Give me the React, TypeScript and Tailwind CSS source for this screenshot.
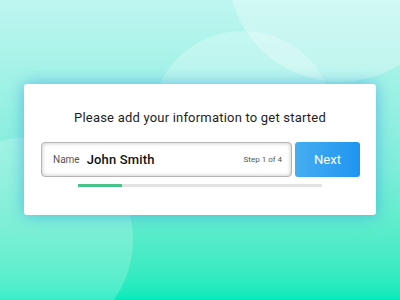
import React from "react";

export default function App() {
  return (
    <div
      className="relative w-[400px] h-[300px] overflow-hidden bg-gradient-to-b from-[#bdf6f1] via-[#86eedd] to-[#00eabc]"
      style={{ fontFamily: "Roboto, 'Liberation Sans', sans-serif" }}
    >
      {/* decorative circles */}
      <div className="absolute left-[228px] top-[-142px] w-[224px] h-[224px] rounded-full bg-white/30" />
      <div className="absolute left-[151px] top-[31px] w-[184px] h-[184px] rounded-full bg-white/25" />
      <div className="absolute left-[-73px] top-[137px] w-[206px] h-[206px] rounded-full bg-white/20" />

      <div className="relative flex flex-col pt-[84px] px-[24px]">
        <div className="w-[352px] h-[131px] bg-white rounded-[3px] shadow-[0_0_16px_rgba(40,150,225,0.6)] flex flex-col items-center">
          <div className="mt-[26px] text-[13px] leading-[16px] text-[#1e1e1e] tracking-[0.2px]">
            Please add your information to get started
          </div>
          <div className="mt-[16px] flex gap-[3px] self-start ml-[17px]">
            <div className="w-[251px] h-[35px] rounded-[4px] border border-[#b5b5b5] shadow-[inset_0_0_4px_rgba(0,0,0,0.25)] flex items-center pl-[11px] pr-[9px]">
              <span className="text-[10px] text-[#555]">Name</span>
              <span className="ml-[7px] text-[13px] font-medium text-[#111] tracking-[0.15px]">John Smith</span>
              <span className="ml-auto text-[8px] text-[#555]">Step 1 of 4</span>
            </div>
            <div className="w-[65px] h-[35px] rounded-[3px] bg-gradient-to-r from-[#45aef2] to-[#1e94ef] flex items-center justify-center text-white text-[13px]">
              Next
            </div>
          </div>
          <div className="mt-[7px] self-start ml-[54px] w-[244px] h-[3px] bg-[#e2e2e2]">
            <div className="w-[44px] h-[3px] bg-[#47c48a]" />
          </div>
        </div>
      </div>
    </div>
  );
}
